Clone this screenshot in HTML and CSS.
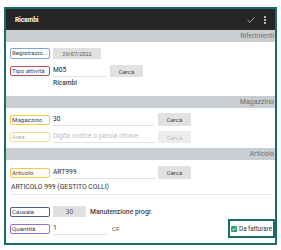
FILE: index.html
```html
<!DOCTYPE html>
<html lang="it">
<head>
<meta charset="utf-8">
<title>Ricambi</title>
<link rel="stylesheet" href="styles.css">
</head>
<body>
<div class="frame">
  <header class="appbar">
    <span class="title">Ricambi</span>
    <span class="actions">
      <svg class="ic-check" width="8" height="6" viewBox="0 0 8 6"><path d="M0.6 3.2 L2.8 5.2 L7.4 0.6" fill="none" stroke="#bdbdbd" stroke-width="0.9"/></svg>
      <svg class="ic-dots" width="2" height="8" viewBox="0 0 2 8"><circle cx="1" cy="1" r="0.9" fill="#fff"/><circle cx="1" cy="4" r="0.9" fill="#fff"/><circle cx="1" cy="7" r="0.9" fill="#fff"/></svg>
    </span>
  </header>

  <div class="sec">Riferimenti</div>
  <div class="body b1">
    <div class="row r1">
      <span class="lbl lbl-tall blue">Registrazio...</span>
      <span class="greybox date">29/07/2022</span>
    </div>
    <div class="row r2">
      <span class="lbl red">Tipo attività</span>
      <span class="inp short">M05</span>
      <span class="btn">Cerca</span>
    </div>
    <div class="row r3">
      <span class="strong-desc">Ricambi</span>
    </div>
  </div>

  <div class="sec">Magazzino</div>
  <div class="body b2">
    <div class="row r4">
      <span class="lbl yellow">Magazzino</span>
      <span class="inp long">30</span>
      <span class="btn btn-tall">Cerca</span>
    </div>
    <div class="row r5">
      <span class="lbl yellow-light muted">Area</span>
      <span class="inp long placeholder">Digita codice o parola chiave</span>
      <span class="btn disabled">Cerca</span>
    </div>
  </div>

  <div class="sec">Articolo</div>
  <div class="body b3">
    <div class="row r6">
      <span class="lbl yellow">Articolo</span>
      <span class="inp long">ART999</span>
      <span class="btn btn-tall">Cerca</span>
    </div>
    <div class="row r7">
      <span class="full-desc">ARTICOLO 999 (GESTITO COLLI)</span>
    </div>
    <div class="row r8">
      <span class="lbl navy">Causale</span>
      <span class="greybox code">30</span>
      <span class="strong-text">Manutenzione progr.</span>
    </div>
    <div class="row r9">
      <span class="lbl purple">Quantità</span>
      <span class="inp short">1</span>
      <span class="unit">CF</span>
      <span class="spacer"></span>
      <label class="chk">
        <span class="box">
          <svg width="6" height="6" viewBox="0 0 6 6"><path d="M1.2 3 L2.5 4.3 L4.9 1.6" fill="none" stroke="#fff" stroke-width="0.9"/></svg>
        </span>
        <span class="chk-text">Da fatturare</span>
      </label>
    </div>
  </div>
</div>
</body>
</html>
```

FILE: styles.css
```css
* { box-sizing: border-box; margin: 0; padding: 0; }

body {
  margin: 0;
  width: 281px;
  height: 250px;
  overflow: hidden;
  background: #ffffff;
  font-family: Roboto, "Noto Sans", "Liberation Sans", sans-serif;
  color: #333333;
}

.frame {
  margin: 7px 0 0 4px;
  width: 273px;
  border: 2px solid #1b6b66;
  background: #ffffff;
}

.appbar {
  height: 21px;
  background: #262626;
  display: flex;
  align-items: center;
  padding: 0 9px 0 9px;
  color: #ffffff;
}

.title {
  flex: 1;
  font-size: 6.6px;
  font-weight: 700;
  letter-spacing: -0.1px;
}

.actions {
  display: flex;
  align-items: center;
  gap: 9px;
}

.ic-check, .ic-dots { display: block; }

.sec {
  height: 12px;
  line-height: 12px;
  background: #c8ced2;
  color: #6b7176;
  font-size: 7px;
  text-align: right;
  padding-right: 1px;
}

.body {
  padding: 0 3px 0 4px;
  display: flex;
  flex-direction: column;
}

.row {
  display: flex;
  align-items: center;
  white-space: nowrap;
}

.b1 { padding-top: 6px; padding-bottom: 7px; }
.r1 { height: 11px; }
.r2 { height: 12px; margin-top: 6px; }
.r3 { height: 12px; }

.b2 { padding-top: 5px; padding-bottom: 5px; }
.r4 { height: 13px; }
.r5 { height: 12px; margin-top: 5px; }

.b3 { padding-top: 6px; padding-bottom: 5px; }
.r6 { height: 13px; }
.r7 { height: 15px; margin-top: 1px; }
.r8 { height: 11px; margin-top: 11px; }
.r9 { height: 19px; margin-top: 2px; }

.lbl {
  flex: none;
  width: 40px;
  height: 10px;
  border: 1px solid #999;
  border-radius: 2px;
  font-size: 6.2px;
  line-height: 8px;
  padding-left: 1px;
  color: #444;
  overflow: hidden;
}
.lbl-tall { height: 11px; line-height: 9px; }

.blue { border-color: #7fa4dc; }
.red { border-color: #c0504f; }
.yellow { border-color: #f2c94c; }
.yellow-light { border-color: #f7de8f; }
.navy { border-color: #4e5d8c; }
.purple { border-color: #9070dc; }
.muted { color: #b5b5b5; }

.greybox {
  flex: none;
  margin-left: 3px;
  background: #e0e0e0;
  color: #555;
  display: flex;
  align-items: center;
  justify-content: center;
}
.date { width: 48px; height: 11px; font-size: 5.5px; }
.code { width: 33px; height: 11px; font-size: 6.5px; }

.inp {
  flex: none;
  margin-left: 3px;
  height: 12px;
  border-bottom: 1px solid #e2e2e2;
  font-size: 6.7px;
  line-height: 11px;
  color: #2a2a2a;
}
.short { width: 54px; }
.long { width: 102px; }
.placeholder { color: #bdbdbd; }

.btn {
  flex: none;
  margin-left: 3px;
  width: 33px;
  height: 12px;
  background: #e1e1e1;
  border-radius: 1px;
  font-size: 6px;
  color: #444;
  display: flex;
  align-items: center;
  justify-content: center;
}
.btn-tall { height: 13px; }
.disabled { background: #ededed; color: #bdbdbd; }

.strong-desc {
  margin-left: 43px;
  font-size: 6.6px;
  font-weight: 500;
  color: #444;
}

.r7 {
  border-bottom: 1px solid #e6e6e6;
  align-items: center;
}
.full-desc {
  padding-left: 1px;
  font-size: 6.8px;
  color: #333;
}

.strong-text {
  margin-left: 4px;
  font-size: 6.8px;
  font-weight: 500;
  color: #444;
}

.unit {
  margin-left: 5px;
  font-size: 6.2px;
  color: #555;
}

.spacer { flex: 1; }

.chk {
  flex: none;
  margin-right: -3px;
  height: 19px;
  width: 47px;
  border: 2px solid #1b6b66;
  display: flex;
  align-items: center;
  padding-left: 1px;
  gap: 2px;
}
.box {
  width: 6px;
  height: 6px;
  background: #2a9d74;
  border-radius: 1px;
  display: flex;
}
.box svg { display: block; }
.chk-text {
  font-size: 6.3px;
  color: #333;
}
```
